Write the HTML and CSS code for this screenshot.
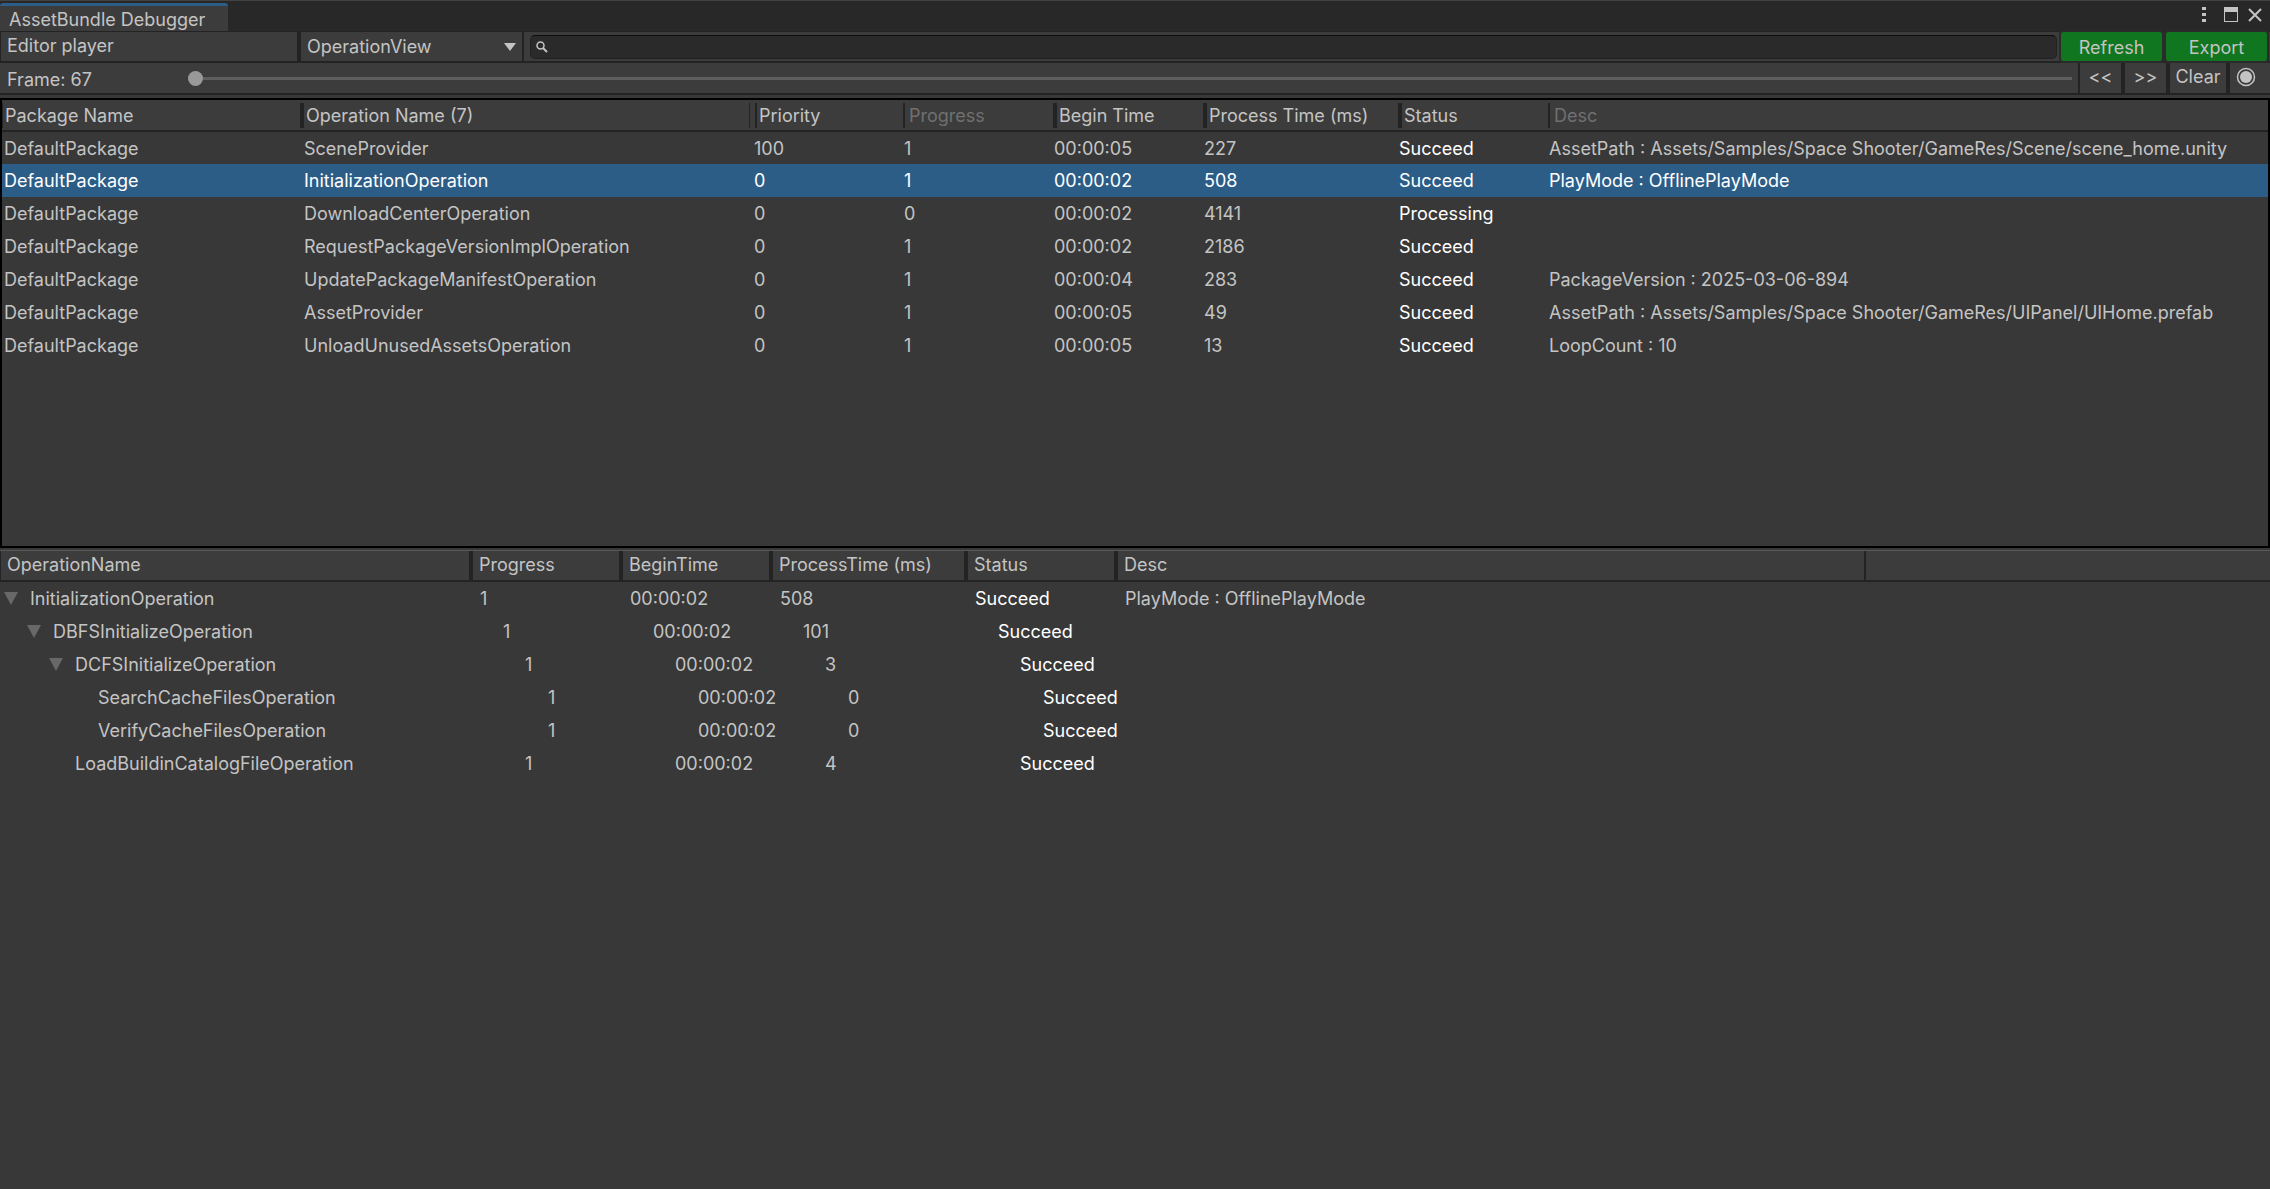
FILE: index.html
```
<!DOCTYPE html>
<html lang="en">
<head>
<meta charset="utf-8">
<title>AssetBundle Debugger</title>
<link rel="stylesheet" href="styles.css">
</head>
<body>
<div class="window">
  <header class="titlebar">
    <h1 class="tab">AssetBundle Debugger</h1>
    <div class="window-buttons">
      <button class="icon-button" aria-label="Menu"><svg width="16" height="18" viewBox="0 0 16 18"><path fill="currentColor" d="M3 2h4v3H3zM3 8h4v3H3zM3 14h4v3H3z"/></svg></button>
      <button class="icon-button" aria-label="Maximize"><svg width="16" height="18" viewBox="0 0 16 18"><path fill="currentColor" fill-rule="evenodd" d="M1 2h14v15H1zM2 7v9h12V7z"/></svg></button>
      <button class="icon-button" aria-label="Close"><svg width="16" height="18" viewBox="0 0 16 18"><path stroke="currentColor" stroke-width="2" fill="none" d="M2 4l12 12M14 4l-12 12"/></svg></button>
    </div>
  </header>

  <div class="toolbar">
    <button class="player">Editor player</button>
    <div class="view-picker">
      <select aria-label="View"><option>OperationView</option></select>
      <svg class="arrow" width="12" height="8" viewBox="0 0 12 8"><path fill="currentColor" d="M0 0h12L6 8z"/></svg>
    </div>
    <label class="search">
      <svg width="12" height="12" viewBox="0 0 12 12"><circle cx="4.500" cy="4.500" r="3.500" stroke="currentColor" stroke-width="1.500" fill="none"/><path d="M7 7l4 4" stroke="currentColor" stroke-width="2"/></svg>
      <input type="text" aria-label="Search">
    </label>
    <div class="actions">
      <button class="action">Refresh</button>
      <button class="action">Export</button>
    </div>
  </div>

  <div class="framebar">
    <label class="frame-label" for="frame">Frame: 67</label>
    <input class="slider" id="frame" type="range" min="0" max="67" value="0">
    <div class="frame-buttons">
      <button class="step">&lt;&lt;</button>
      <button class="step">&gt;&gt;</button>
      <button class="clear">Clear</button>
      <button class="record" aria-label="Record"><svg width="20" height="20" viewBox="0 0 20 20"><circle cx="10" cy="10" r="8.500" stroke="currentColor" stroke-width="1.500" fill="none"/><circle cx="10" cy="10" r="6" fill="currentColor"/></svg></button>
    </div>
  </div>

  <section class="operations">
    <table class="list">
      <colgroup><col class="c-package"><col class="c-name"><col class="c-short"><col class="c-short"><col class="c-short"><col class="c-time"><col class="c-short"><col></colgroup>
      <thead>
        <tr>
          <th class="first"><span>Package Name</span></th>
          <th class="name"><span>Operation Name (7)</span></th>
          <th class="priority"><span>Priority</span></th>
          <th class="dim"><span>Progress</span></th>
          <th><span>Begin Time</span></th>
          <th><span>Process Time (ms)</span></th>
          <th><span>Status</span></th>
          <th class="dim"><span>Desc</span></th>
        </tr>
      </thead>
      <tbody>
        <tr><td>DefaultPackage</td><td>SceneProvider</td><td>100</td><td>1</td><td>00:00:05</td><td>227</td><td class="status">Succeed</td><td>AssetPath : Assets/Samples/Space Shooter/GameRes/Scene/scene_home.unity</td></tr>
        <tr class="selected"><td>DefaultPackage</td><td>InitializationOperation</td><td>0</td><td>1</td><td>00:00:02</td><td>508</td><td class="status">Succeed</td><td>PlayMode : OfflinePlayMode</td></tr>
        <tr><td>DefaultPackage</td><td>DownloadCenterOperation</td><td>0</td><td>0</td><td>00:00:02</td><td>4141</td><td class="status">Processing</td><td></td></tr>
        <tr><td>DefaultPackage</td><td>RequestPackageVersionImplOperation</td><td>0</td><td>1</td><td>00:00:02</td><td>2186</td><td class="status">Succeed</td><td></td></tr>
        <tr><td>DefaultPackage</td><td>UpdatePackageManifestOperation</td><td>0</td><td>1</td><td>00:00:04</td><td>283</td><td class="status">Succeed</td><td>PackageVersion : 2025-03-06-894</td></tr>
        <tr><td>DefaultPackage</td><td>AssetProvider</td><td>0</td><td>1</td><td>00:00:05</td><td>49</td><td class="status">Succeed</td><td>AssetPath : Assets/Samples/Space Shooter/GameRes/UIPanel/UIHome.prefab</td></tr>
        <tr><td>DefaultPackage</td><td>UnloadUnusedAssetsOperation</td><td>0</td><td>1</td><td>00:00:05</td><td>13</td><td class="status">Succeed</td><td>LoopCount : 10</td></tr>
      </tbody>
    </table>
  </section>

  <section class="details">
    <table class="tree">
      <colgroup><col class="t-name"><col class="c-short"><col class="c-short"><col class="c-time"><col class="c-short"><col class="t-desc"><col></colgroup>
      <thead>
        <tr><th>OperationName</th><th>Progress</th><th>BeginTime</th><th>ProcessTime (ms)</th><th>Status</th><th>Desc</th><th class="tail"></th></tr>
      </thead>
      <tbody>
        <tr><td class="open">InitializationOperation</td><td>1</td><td>00:00:02</td><td>508</td><td class="status">Succeed</td><td>PlayMode : OfflinePlayMode</td><td></td></tr>
        <tr class="level-1"><td class="open">DBFSInitializeOperation</td><td>1</td><td>00:00:02</td><td>101</td><td class="status">Succeed</td><td></td><td></td></tr>
        <tr class="level-2"><td class="open">DCFSInitializeOperation</td><td>1</td><td>00:00:02</td><td>3</td><td class="status">Succeed</td><td></td><td></td></tr>
        <tr class="level-3"><td>SearchCacheFilesOperation</td><td>1</td><td>00:00:02</td><td>0</td><td class="status">Succeed</td><td></td><td></td></tr>
        <tr class="level-3"><td>VerifyCacheFilesOperation</td><td>1</td><td>00:00:02</td><td>0</td><td class="status">Succeed</td><td></td><td></td></tr>
        <tr class="level-2"><td>LoadBuildinCatalogFileOperation</td><td>1</td><td>00:00:02</td><td>4</td><td class="status">Succeed</td><td></td><td></td></tr>
      </tbody>
    </table>
  </section>
</div>
</body>
</html>
```
FILE: styles.css
```
* { box-sizing: border-box; }

body {
  margin: 0;
  background: #383838;
  color: #c4c4c4;
  font: 18px/24px Inter, "Liberation Sans", sans-serif;
}

button, input, select {
  margin: 0;
  padding: 0;
  border: 0;
  background: none;
  color: inherit;
  font: inherit;
}

svg { display: block; }

.window {
  display: flex;
  flex-direction: column;
  min-height: 100vh;
  border-top: 1px solid #424242;
}

/* Title bar */
.titlebar {
  display: flex;
  justify-content: space-between;
  height: 31px;
  padding-top: 2px;
  border-bottom: 1px solid #232323;
  background: #282828;
}

.tab {
  width: 228px;
  margin: 0;
  padding: 2px 9px 0;
  border-top: 3px solid #2c5d87;
  border-radius: 3px 3px 0 0;
  background: #3c3c3c;
  font-size: 18px;
  font-weight: 400;
  line-height: 23px;
  white-space: nowrap;
}

.window-buttons {
  display: flex;
  gap: 8px;
  padding: 2px 7px 0 0;
}

.icon-button { height: 18px; }

/* Toolbar */
.toolbar {
  display: flex;
  height: 31px;
  border-bottom: 2px solid #232323;
  background: #3c3c3c;
}

.player {
  width: 301px;
  padding: 0 0 2px 6px;
  border-left: 1px solid #232323;
  border-right: 4px solid #232323;
  text-align: left;
}

.view-picker {
  position: relative;
  width: 223px;
  border-right: 2px solid #232323;
}

.view-picker select {
  width: 100%;
  height: 100%;
  padding-left: 6px;
  appearance: none;
}

.arrow {
  position: absolute;
  top: 11px;
  right: 6px;
}

.search {
  display: flex;
  flex: 1;
  align-items: center;
  gap: 8px;
  margin: 3px 4px 2px 6px;
  padding: 0 5px;
  border: 1px solid #212121;
  border-top-color: #0d0d0d;
  border-radius: 5px;
  background: #2a2a2a;
}

.search input {
  flex: 1;
  height: 20px;
  outline: 0;
}

.actions {
  display: flex;
  gap: 4px;
  padding-right: 3px;
}

.action {
  width: 101px;
  padding-top: 2px;
  border-radius: 2px;
  background: #10761f;
  outline: 2px solid #2b2b2b;
}

/* Frame bar */
.framebar {
  display: flex;
  height: 32px;
  border-bottom: 2px solid #232323;
  background: #3c3c3c;
}

.frame-label {
  width: 188px;
  padding: 5px 7px 0;
}

.slider {
  flex: 1;
  height: 15px;
  margin: 8px 6px 0 0;
  appearance: none;
  background: linear-gradient(#5e5e5e, #5e5e5e) 0 6px / 100% 3px no-repeat;
}

.slider::-webkit-slider-thumb {
  width: 15px;
  height: 15px;
  border-radius: 50%;
  appearance: none;
  background: #999999;
}

.frame-buttons {
  display: flex;
  padding: 0 0 0 2px;
  gap: 4px;
  background: #232323;
}

.frame-buttons button {
  background: #3c3c3c;
  padding-bottom: 3px;
}

.step { width: 41px; }
.clear { width: 56px; }

.frame-buttons .record {
  width: 40px;
  padding-left: 6px;
}

/* Operation list */
table {
  width: 100%;
  border-collapse: collapse;
  table-layout: fixed;
}

th, td {
  padding: 0;
  font-weight: 400;
  text-align: left;
  white-space: nowrap;
}

.status { color: #ffffff; }

.operations {
  height: 450px;
  margin-top: 3px;
  border: 2px solid #000000;
}

.c-package { width: 298px; }
.c-name { width: 450px; }
.c-short { width: 150px; }
.c-time { width: 195px; }

.list th {
  height: 31px;
  border-bottom: 2px solid #232323;
  background: #3c3c3c;
}

.list th span {
  display: block;
  height: 25px;
  margin-left: 3px;
  padding-left: 2px;
  border-left: 4px solid #232323;
  line-height: 26px;
}

.list th.first span {
  margin-left: 0;
  border-left-width: 1px;
}

.list th.name span {
  margin: 0 -1px 0 0;
  border-right: 2px solid #232323;
}

.list th.priority span {
  margin-left: 5px;
  border-left-width: 2px;
}

.list th.dim span {
  border-left: 2px solid #232323;
  padding-left: 4px;
  color: #707070;
}

.list td {
  height: 33px;
  padding: 1px 0 0 4px;
}

.list td:first-child { padding-left: 2px; }

.selected { background: #2c5d87; color: #ffffff; }

/* Operation tree */
.details {
  margin-top: 2px;
  border-top: 1px solid #585858;
}

.t-name { width: 469px; }
.t-desc { width: 750px; }

.tree th {
  height: 31px;
  padding: 0 0 2px 6px;
  border-bottom: 2px solid #232323;
  border-left: 4px solid #232323;
  background: #3c3c3c;
}

.tree th:first-child { border-left-width: 1px; }
.tree th.tail { border-left-width: 2px; }

.tree {
  --indent: 0px;
  border-collapse: separate;
  border-spacing: 0;
}

.tree td {
  height: 33px;
  padding: 1px 0 0 calc(11px + var(--indent));
}

.tree td:first-child { padding-left: calc(30px + var(--indent)); }

.level-1 { --indent: 23px; }
.level-2 { --indent: 45px; }
.level-3 { --indent: 68px; }

.open::before {
  content: "";
  display: inline-block;
  margin: 0 12px 0 -26px;
  border: solid transparent;
  border-width: 13px 7px 0;
  border-top-color: #686868;
}
```
